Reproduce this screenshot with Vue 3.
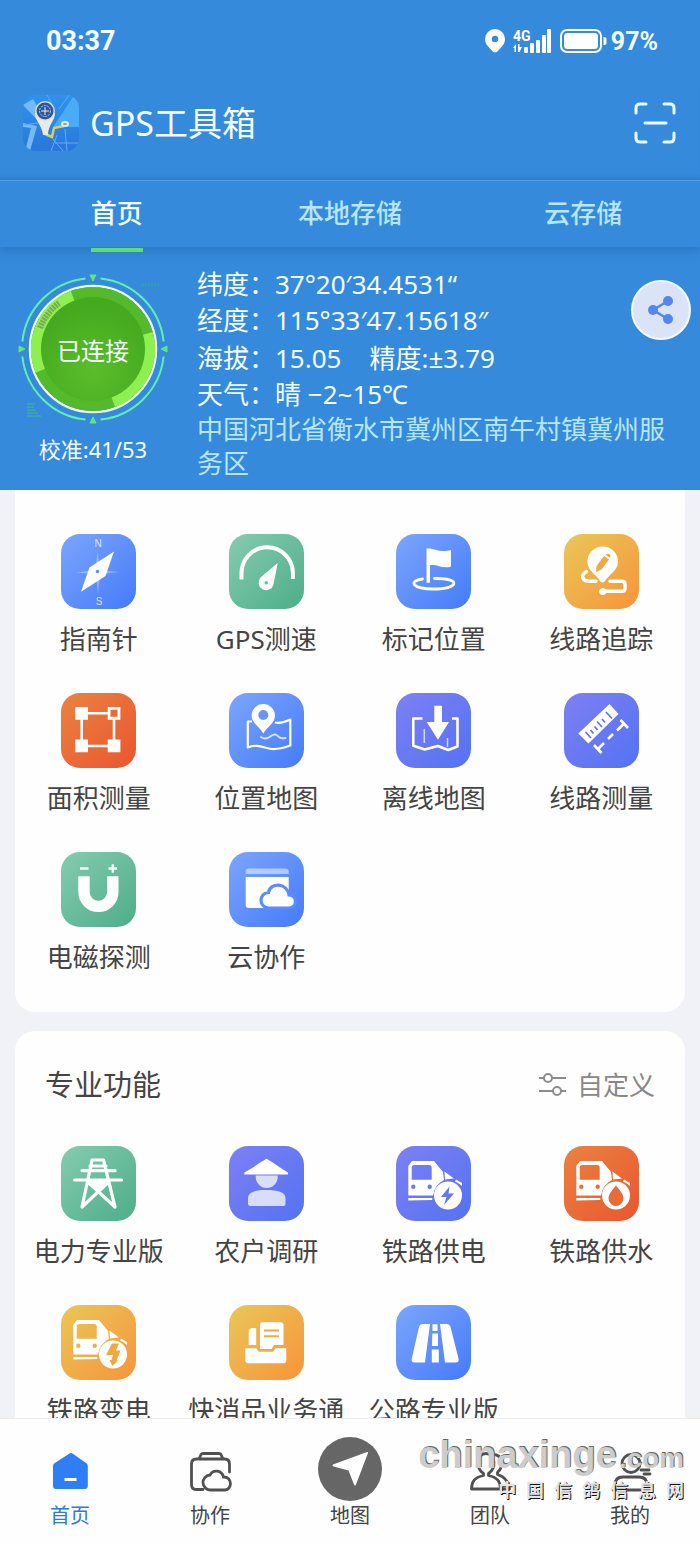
<!-- src/App.vue -->
<template>
  <div class="app">
    <header class="top">
      <div class="status-bar">
        <span class="clock">03:37</span>
        <div class="status-icons">
          <svg width="20" height="24" viewBox="0 0 20 24">
            <path fill="#fff" fill-rule="evenodd" d="M10 0a10 10 0 0 1 10 10c0 5-3.500 8-6.500 11.300-2.500 3-4.500 3-7 0C3.500 18 0 15 0 10A10 10 0 0 1 10 0zm0 6.800a3.200 3.200 0 1 0 0 6.400 3.200 3.200 0 0 0 0-6.400z" />
          </svg>
          <svg width="39" height="24" viewBox="0 0 39 24" fill="#fff">
            <text x="0" y="12" class="net-text">4G</text>
            <path d="M3 15v8H1.500v-4H0zM5 15h1.500v3H9l-2.500 5H5z" />
            <rect x="11" y="18" width="4" height="6" rx="1" />
            <rect x="17" y="14" width="4" height="10" rx="1" />
            <rect x="23" y="11" width="4" height="13" rx="1" />
            <rect x="29" y="6" width="4" height="18" rx="1" />
            <rect x="34" y="0" width="4" height="24" rx="1" />
          </svg>
          <svg width="47" height="24" viewBox="0 0 47 24">
            <rect x="1" y="1" width="40" height="22" rx="6" fill="none" stroke="#fff" stroke-width="2" />
            <rect x="4" y="4" width="34" height="16" rx="3.500" fill="#fff" />
            <path d="M43.500 8q3 0 3 2v4q0 2-3 2z" fill="#fff" />
          </svg>
          <span class="battery-text">97%</span>
        </div>
      </div>

      <div class="title-bar">
        <svg class="app-logo" viewBox="0 0 56 56" aria-hidden="true">
          <defs>
            <clipPath id="logoClip"><rect width="56" height="56" rx="13" /></clipPath>
            <linearGradient id="logoBg" x1="0" y1="0" x2="0" y2="1">
              <stop offset="0" stop-color="#2f92ee" />
              <stop offset="1" stop-color="#2a76dc" />
            </linearGradient>
          </defs>
          <g clip-path="url(#logoClip)">
            <rect width="56" height="56" fill="url(#logoBg)" />
            <path d="M30 32 50 2h6v30z" fill="#4aabf8" />
            <path d="M0 10 10 4l14 24-4 3zM0 28l14 3-7 25H2l6-23-8-1z" fill="#74bbf6" />
            <path d="M36 14 46 0M24 0l5 10M0 30l15-2M30 44l10 12M42 34l2 22M32 48h24M34 40l-6 16" stroke="#62abf0" stroke-width="1" fill="none" />
            <path d="M22 39l7 3 2-9 10-2" stroke="#d9cf58" stroke-width="2.500" fill="none" />
            <ellipse cx="42" cy="29" rx="4" ry="3" fill="#e3eddf" />
            <ellipse cx="42" cy="29" rx="2" ry="1" fill="#78a56c" />
            <path d="M12 18c0 8 7 12 8 22h5c0-10 7-14 7-22z" fill="#e6ebe8" />
            <circle cx="22" cy="16" r="10" fill="#d4e4c4" />
            <circle cx="22" cy="16" r="8.500" fill="#32549b" />
            <circle cx="22" cy="16" r="5.500" fill="none" stroke="#b5cbe7" stroke-dasharray="2 1" />
            <path d="M22 12v8M18 16h8" stroke="#e6eefb" />
          </g>
        </svg>
        <h1 class="app-title">GPS工具箱</h1>
        <button class="scan-btn" title="扫一扫">
          <svg width="42" height="42" viewBox="0 0 42 42" fill="none" stroke="#e9fbff" stroke-width="3" stroke-linecap="round">
            <path d="M2 11V6q0-4 4-4h6M30 2h6q4 0 4 4v5M40 31v5q0 4-4 4h-6M12 40H6q-4 0-4-4v-5M11 21h21" />
          </svg>
        </button>
      </div>

      <nav class="tabs">
        <button
            v-for="(tab, idx) in tabs"
            :key="tab"
            class="tab"
            :class="{ active: idx === currentTab }"
            @click="currentTab = idx"
        >
          <span class="tab-label">{{ tab }}</span>
        </button>
      </nav>

      <section class="gps-panel">
        <div class="connect">
          <div class="dial">
            <svg viewBox="0 0 150 150" aria-hidden="true">
              <defs>
                <radialGradient id="dialBg" cx="0.5" cy="0.7" r="0.6">
                  <stop offset="0" stop-color="#5bbd2a" />
                  <stop offset="1" stop-color="#45aa20" />
                </radialGradient>
              </defs>
              <g fill="none">
                <path d="M82.500 4.400A71 71 0 0 1 145.600 67.500M145.600 82.500A71 71 0 0 1 82.500 145.600M67.500 145.600A71 71 0 0 1 4.400 82.500M4.400 67.500A71 71 0 0 1 67.500 4.400" stroke="#62f0a8" stroke-width="2" />
                <circle cx="75" cy="75" r="63" stroke="#eafff4" stroke-width="2.500" />
                <circle cx="75" cy="75" r="56.500" stroke="#54b92b" stroke-width="11" />
                <path d="M22.800 96.600A56.500 56.500 0 0 1 54.800 22.200M129.400 59.400A56.500 56.500 0 0 1 95.200 127.800" stroke="#8df04f" stroke-width="11" />
                <path d="M22 54A57 57 0 0 1 41 29" stroke="#78a85a" stroke-width="6" stroke-dasharray="2 1" />
                <path d="M9 130h8M9 133h7M9 136h9M9 139h11M9 142h14" stroke="#3fbd8b" />
                <path d="M124 11h18" stroke="#2f9fae" stroke-width="3" stroke-dasharray="2 1" />
                <path d="M128 16h12" stroke="#3091c0" />
              </g>
              <circle cx="75" cy="75" r="52" fill="url(#dialBg)" />
              <path d="M72 1h6l-3 6zM72 149h6l-3-6zM1 72v6l6-3zM149 72v6l-6-3z" fill="#5fe873" stroke="#5fe873" />
            </svg>
            <span class="dial-text">已连接</span>
          </div>
          <p class="calibration">校准:41/53</p>
        </div>

        <div class="readings">
          <p>纬度：37°20′34.4531“</p>
          <p>经度：115°33′47.15618″</p>
          <p class="altitude"><span>海拔：15.05</span><span>精度:±3.79</span></p>
          <p>天气：晴 −2~15℃</p>
          <p class="address">中国河北省衡水市冀州区南午村镇冀州服务区</p>
        </div>

        <button class="share-btn" title="分享">
          <svg width="28" height="30" viewBox="0 0 28 30" fill="#5585ee">
            <path d="M21 6 6 15l15 9" fill="none" stroke="#5585ee" stroke-width="2.500" />
            <circle cx="6" cy="15" r="5" />
            <circle cx="21" cy="6" r="5" />
            <circle cx="21" cy="24" r="5" />
          </svg>
        </button>
      </section>
    </header>

    <main class="content">
      <section class="card card-first">
        <div class="tool-grid">
          <button v-for="tool in tools" :key="tool.name" class="tool">
            <svg class="tool-icon" :class="tool.color" viewBox="0 0 75 75" v-html="glyphs[tool.icon]"></svg>
            <span class="tool-name">{{ tool.name }}</span>
          </button>
        </div>
      </section>

      <section class="card">
        <div class="card-head">
          <h2>专业功能</h2>
          <button class="custom-btn">
            <svg width="28" height="24" viewBox="0 0 28 24" fill="none" stroke="#8c8c8c" stroke-width="2">
              <path d="M0 5h5M13 5h14M0 18h14M22 18h5" />
              <circle cx="9" cy="5" r="4" />
              <circle cx="18" cy="18" r="4" />
            </svg>
            自定义
          </button>
        </div>
        <div class="tool-grid">
          <button v-for="tool in proTools" :key="tool.name" class="tool">
            <svg class="tool-icon" :class="tool.color" viewBox="0 0 75 75" v-html="glyphs[tool.icon]"></svg>
            <span class="tool-name">{{ tool.name }}</span>
          </button>
        </div>
      </section>
    </main>

    <footer class="bottom-nav">
      <a
          v-for="item in navItems"
          :key="item.name"
          class="nav-item"
          :class="{ active: item.name === '首页' }"
          href="#"
      >
        <svg class="nav-icon" viewBox="0 0 64 64" v-html="navGlyphs[item.icon]"></svg>
        <span>{{ item.name }}</span>
      </a>
      <div class="watermark">
        <div class="mark-site">chinaxinge<span>.com</span></div>
        <div class="mark-name">
          <span v-for="(ch, idx) in '中国信鸽信息网'" :key="idx">{{ ch }}</span>
        </div>
      </div>
    </footer>
  </div>
</template>

<script setup>
import { ref } from 'vue'

// ─── DATA ─────────────────────────────────────────────────────────────────────
const tabs = ['首页', '本地存储', '云存储']
const currentTab = ref(0)

const tools = [
  { name: '指南针',   icon: 'compass', color: 'blue' },
  { name: 'GPS测速',  icon: 'gauge',   color: 'green' },
  { name: '标记位置', icon: 'flag',    color: 'blue' },
  { name: '线路追踪', icon: 'track',   color: 'yellow' },
  { name: '面积测量', icon: 'area',    color: 'orange' },
  { name: '位置地图', icon: 'map',     color: 'blue' },
  { name: '离线地图', icon: 'offline', color: 'purple' },
  { name: '线路测量', icon: 'ruler',   color: 'purple' },
  { name: '电磁探测', icon: 'magnet',  color: 'green' },
  { name: '云协作',   icon: 'cloud',   color: 'blue' },
]

const proTools = [
  { name: '电力专业版',   icon: 'tower',      color: 'green' },
  { name: '农户调研',     icon: 'farmer',     color: 'purple' },
  { name: '铁路供电',     icon: 'trainPower', color: 'purple' },
  { name: '铁路供水',     icon: 'trainWater', color: 'orange' },
  { name: '铁路变电',     icon: 'trainSub',   color: 'yellow' },
  { name: '快消品业务通', icon: 'orders',     color: 'yellow' },
  { name: '公路专业版',   icon: 'road',       color: 'blue' },
]

const navItems = [
  { name: '首页', icon: 'home' },
  { name: '协作', icon: 'share' },
  { name: '地图', icon: 'nav' },
  { name: '团队', icon: 'team' },
  { name: '我的', icon: 'me' },
]

// ─── GLYPHS (75 x 75 tiles) ───────────────────────────────────────────────────

// train front with a round badge at the lower right
function train(badge) {
  return `
    <path fill="#fff" fill-rule="evenodd" d="M12.300 49.500V20L16 15h22l9 11 1 8q-9 4-11 15.500zM18 19q-2.300 0-2.300 3v11.700h20V22q0-3-2.500-3zM17.300 38.500a2.200 2.200 0 1 0 0 4.400 2.200 2.200 0 0 0 0-4.400zm16.400 0a2.200 2.200 0 1 0 0 4.400 2.200 2.200 0 0 0 0-4.400z"/>
    <path fill="#fff" d="M48.500 25.500 58 32.500l-9 1zM60 33.500l6 3.500v3q-3-3-7-4.500zM12.300 52h24v2l-24 .5z"/>
    <circle cx="52" cy="49.500" r="14" fill="#fff"/>
    <g fill="currentColor">${badge}</g>`
}

const glyphs = {
  compass: `
    <path fill="#fff" opacity=".3" d="M36.700 17l2.500 19L58 38l-18.500 2.500L37 59l-2.500-19L15 38.500 34 36z"/>
    <path fill="#fff" d="M53 17.500 44.500 42 20 57.800 28.500 33.500z"/>
    <circle cx="36.500" cy="37.500" r="1.800" fill="currentColor"/>
    <g fill="#fff" opacity=".75" font-family="Liberation Sans" font-size="10" text-anchor="middle"><text x="37" y="12.500">N</text><text x="38" y="71">S</text></g>`,
  gauge: `
    <path fill="none" stroke="#fff" stroke-width="4" d="M12.500 45.500V39a25.700 25.700 0 0 1 51.400 0v6"/>
    <path fill="#fff" fill-rule="evenodd" d="M48.700 29 44.500 50.500a7.600 7.600 0 1 1-13-7zM37.200 47a1.700 1.700 0 1 0 0 3.400 1.700 1.700 0 0 0 0-3.400z"/>`,
  flag: `
    <path fill="none" stroke="#fff" stroke-width="2.800" stroke-linecap="round" d="M26.500 45C12 47 16 55 37.500 55c26 0 28-11 1-10.500"/>
    <path fill="#fff" d="M30.500 14.500c7-1 13 5 24.500 1.500v16.500c-9 3-14-3-21-1v17.200h-3.500z"/>`,
  track: `
    <path fill="none" stroke="#fff" stroke-width="3.500" stroke-linecap="round" d="M22.500 37.500c-6.500 4-4.500 9.800 3.500 9.800h6M46 47.300h12q3 0 3 3v4q0 3-3 3H39"/>
    <circle cx="38.700" cy="57.500" r="3.500" fill="#fff"/>
    <path fill="#fff" d="M38.700 12.500a15.300 15.300 0 0 1 15.300 15c0 9-9 13-13 19.500q-2.500 3-5 0C32 40 23.400 37 23.400 27.500a15.300 15.300 0 0 1 15.300-15z"/>
    <path fill="currentColor" d="M40 22l5 3.500-7.500 10-5.500 2.500.500-6zM41.500 20.500q3-2 5 .8l-.8 2.500z"/>`,
  area: `
    <path fill="none" stroke="#fff" stroke-width="2.600" d="M20.700 20.300H53V53H20.700z"/>
    <path fill="#fff" d="M14.300 14H27v12.700H14.300zM46.700 14h12.700v12.700H46.700zM14.300 46.500H27v12.800H14.300zM46.700 46.500h12.700v12.800H46.700z"/>
    <path fill="currentColor" d="M49.500 16.800h7v7h-7z"/>`,
  map: `
    <path fill="none" stroke="#fff" stroke-width="2.200" stroke-linejoin="round" d="M23 28.500h-4.200v26c9-4.500 17 1 24 1.500 8 .5 13-1.500 18.500-3.500v-26c-6 3-10 4-15.500 3"/>
    <path fill="none" stroke="#fff" stroke-width="2" stroke-linecap="round" opacity=".75" d="M32 44c4 3 7 1.500 10-1 4-3 6-1 8 1s4 1.500 6.500 1"/>
    <path fill="#fff" fill-rule="evenodd" d="M34.300 11A11.700 11.700 0 0 1 46 22.700C46 30 38 34 34.300 40.500 31 34 22.600 30 22.600 22.700A11.700 11.700 0 0 1 34.300 11zm0 6a5 5 0 1 0 0 10 5 5 0 0 0 0-10z"/>`,
  offline: `
    <path fill="none" stroke="#fff" stroke-width="2.600" stroke-linejoin="round" d="M26.500 25.500h-9.200v27.300l11.500 3.700 13-3.500 10.500 4 9.200-3.500v-28H56"/>
    <path stroke="#fff" stroke-width="1.500" opacity=".7" d="M28.300 36v14M51.500 45v9"/>
    <path fill="#fff" d="M38.300 12.700H46V29h7L42 46.700 30.700 29h7.600z"/>`,
  ruler: `
    <path fill="#fff" d="M14.300 40.500 45.500 11l9 10-30 29.500z"/>
    <path stroke="currentColor" stroke-width="1.800" d="M21.500 39l5.500 6M26.500 37l3 3.500M30.500 33.500l3 3.500M33 28.500l5 5.500M38 26l3 3.500M42 19l6 6.500"/>
    <path stroke="#fff" stroke-width="2.600" fill="none" d="M34 56l6-6M44 46l5-5M53 37.500l6.500-6.500M30 52l7.500 8M56.500 27l7.500 8"/>`,
  magnet: `
    <path fill="none" stroke="#fff" stroke-width="11.400" d="M23 24.300V40a14.400 14.400 0 0 0 28.800 0V24.300"/>
    <path stroke="#fff" stroke-width="2.400" opacity=".9" d="M19 16.500h8.500M47.500 16.500h8.500M51.800 12.300v8.500"/>`,
  cloud: `
    <path fill="#fff" opacity=".5" d="M16.700 22v-2.500q0-3 3-3h37q3 0 3 3V22z"/>
    <path fill="#fff" d="M16.700 25h43v13L38 56H20q-3.300 0-3.300-3z"/>
    <path fill="#fff" stroke="currentColor" stroke-width="3.200" d="M40 56a7.500 7.500 0 0 1-.5-15.500C41.500 30 58 30.500 60 43c9 .5 8 13 0 13z"/>`,
  tower: `
    <g fill="none" stroke="#fff" stroke-width="3.200" stroke-linejoin="round" stroke-linecap="round">
      <path d="M21 61 31 14h11.500L54 61M29 20h16M21 24.700h33M13.500 34h47M28.500 37.500 54 61M46 37.500 21 61"/>
    </g>
    <path fill="#fff" d="M28 35h18.500l-9.300 11z"/>`,
  farmer: `
    <path fill="#fff" opacity=".75" d="M26.700 29.500h22V31a11 11 0 0 1-22 0zM19 52c0-6 8-8 18.500-8s19 2 19 8v6q0 2-2 2h-33q-2.500 0-2.500-2z"/>
    <path fill="#fff" d="M15.300 26.500C24 22 30 17 37.500 12.800 45 17 51 22 59 26.500v2H15.300z"/>`,
  trainPower: train('<path d="M53.500 40.500 45 51h5.500L48 59l10-11.500h-5.500z"/>'),
  trainWater: train('<path d="M52 39.500c3 4 7.500 8 7.500 13a7.500 7.500 0 0 1-15 0c0-5 4.500-9 7.500-13z"/>'),
  trainSub: train('<path d="M51 38.500h7l-3 7h4.500l-4 10 2-.5-6 6-3-6h2l1.500-5h-7z"/>'),
  orders: `
    <path fill="#fff" d="M19.700 40V27q0-4 4-4h3.500v17zM16.300 43.300h11l2.500 3.500H44l2.500-3.500h10.800v12q0 3-3 3h-35q-3 0-3-3z"/>
    <path fill="#fff" d="M31 20.500q0-3.200 3-3.200h17.500q3 0 3 3V40H45l-2.500 4H31z"/>
    <path stroke="currentColor" stroke-width="2" d="M35 25.500h15M35 31.300h15"/>`,
  road: `
    <path fill="#fff" d="M34 19 29 57.500H18.500q-3.500 0-2.700-4L23 22q1-3 4-3zM44 19h6.500q3 0 4 3l8 31.500q.8 4-2.700 4H49z"/>
    <path fill="#fff" d="M36.500 19.300h5V26h-5zM36.300 28.500H42V41h-6zM35.800 44.500h7v13h-7z"/>`,
}

// bottom bar glyphs (64 x 64)
const navGlyphs = {
  home: `
    <path fill="#2f7ef7" d="M31.500 16.500q1.500-1 3 0L48 26q1.800 1.200 1.800 3v20q0 3-3 3H18q-3 0-3-3V29q0-1.800 1.800-3z"/>
    <path stroke="#fff" stroke-width="3" d="M26.500 42.500h12"/>`,
  share: `
    <g fill="none" stroke="#505050" stroke-width="2.800" stroke-linecap="round">
      <path d="M21 22l2-4.500q.5-1 2-1h16q1.500 0 2 1l2 4.500M25 52.500h-7q-4.500 0-4.500-5V27q0-5 5-5h28q5 0 5 5v8"/>
      <path d="M33 53a7.500 7.500 0 0 1-1-15c3-6 12-5 13.500 2C55 40 54 53 47 53z"/>
    </g>`,
  nav: `
    <circle cx="32" cy="32" r="32" fill="#666"/>
    <path fill="#fff" d="M15 27.500 49 15q1.500-.5 1 1L38 47.500q-1 2.300-2 0l-5.500-14-15-4q-2-1-.5-2z"/>`,
  team: `
    <g fill="none" stroke="#505050" stroke-width="2.800" stroke-linejoin="round">
      <path d="M25.500 36.500c-8-5-7-20 2.500-20s10.500 15 2.500 20v2c9 2 12 6 12 13.500h-29c0-7.500 3-11.500 12-13.500z"/>
      <path d="M35 17.500c10 0 11 12 4.500 18v2c7 2 11 6 12 14.500h-9"/>
    </g>`,
  me: `
    <g fill="none" stroke="#505050" stroke-width="2.800" stroke-linecap="round">
      <circle cx="33" cy="26.500" r="9"/>
      <path d="M17 53v-5q0-8 8-8h16q8 0 8 8v5zM43 33h8M46 37h6"/>
    </g>`,
}
</script>

<style>
body {
  background: #f0f2f8;
}
</style>

<style scoped>
.app {
  display: flex;
  flex-direction: column;
  height: 100vh;
  font-family: "Noto Sans", "Noto Sans CJK SC", sans-serif;
  background: #f0f2f8;
}

button {
  padding: 0;
  border: none;
  background: none;
  font: inherit;
  color: inherit;
  cursor: pointer;
}

svg {
  display: block;
}

h1,
h2,
p {
  margin: 0;
  font-weight: 400;
}

/* ─── HEADER ───────────────────────────────────────────────────────────────── */
.top {
  flex: none;
  color: #f2fdff;
  background: #368adc;
}

.status-bar {
  display: flex;
  align-items: center;
  justify-content: space-between;
  height: 82px;
  padding: 0 42px 0 46px;
  font-family: Roboto, "Noto Sans CJK SC", sans-serif;
  font-size: 27px;
  font-weight: 700;
}

.status-icons {
  display: flex;
  align-items: center;
  gap: 8px;
}

.net-text {
  font-size: 14px;
}

.battery-text {
  margin-left: -4px;
  font-size: 25px;
}

.title-bar {
  display: flex;
  align-items: center;
  height: 99px;
  padding: 0 24px 16px 23px;
  box-sizing: border-box;
  border-bottom: 1px solid #5aa6ec;
  box-shadow: inset 0 -5px 5px -4px rgba(20, 80, 150, 0.25);
}

.app-logo {
  width: 56px;
  height: 56px;
}

.app-title {
  flex: 1;
  margin-left: 11px;
  font-size: 34px;
  line-height: 48px;
}

.tabs {
  position: relative;
  z-index: 1;
  display: flex;
  height: 66px;
  box-shadow: 0 4px 10px rgba(20, 80, 140, 0.35);
}

.tab {
  flex: 1;
  display: flex;
  align-items: flex-start;
  justify-content: center;
  font-size: 26px;
  font-weight: 500;
  color: #b5e6fa;
}

.tab-label {
  position: relative;
  line-height: 64px;
}

.tab.active {
  color: #f2fdff;
}

.tab.active .tab-label::after {
  content: '';
  position: absolute;
  left: 0;
  right: 0;
  bottom: -7px;
  height: 4px;
  background: #5ddf68;
}

/* ─── GPS PANEL ────────────────────────────────────────────────────────────── */
.gps-panel {
  position: relative;
  display: flex;
  gap: 11px;
  padding: 19px 22px 10px 0;
}

.connect {
  flex: none;
  width: 186px;
  padding-top: 8px;
}

.dial {
  position: relative;
  width: 150px;
  margin: 0 auto;
}

.dial-text {
  position: absolute;
  inset: 0;
  display: flex;
  align-items: center;
  justify-content: center;
  font-size: 24px;
}

.calibration {
  margin-top: 10px;
  font-size: 22px;
  line-height: 30px;
  text-align: center;
}

.readings {
  flex: 1;
  font-size: 26px;
  line-height: 36px;
}

.altitude {
  display: flex;
  gap: 28px;
  margin-top: 2px;
}

.address {
  line-height: 34px;
  color: #b5e6fa;
}

.share-btn {
  position: absolute;
  top: 33px;
  right: 9px;
  display: flex;
  align-items: center;
  justify-content: center;
  width: 60px;
  height: 60px;
  border: 2px solid #f2fbff;
  border-radius: 50%;
  background: #dbe4f6;
}

/* ─── CARDS ────────────────────────────────────────────────────────────────── */
.content {
  flex: 1;
  min-height: 0;
  padding: 0 15px;
  overflow-y: auto;
  scrollbar-width: none;
}

.card {
  padding: 35px 0;
  border-radius: 20px;
  background: #fefefe;
}

.card-first {
  margin-bottom: 19px;
  padding-top: 44px;
  border-radius: 0 0 20px 20px;
}

.card-head {
  display: flex;
  align-items: center;
  justify-content: space-between;
  margin-bottom: 42px;
  padding: 0 30px;
  line-height: 38px;
  color: #444;
}

.card-head h2 {
  font-size: 29px;
}

.custom-btn {
  display: flex;
  align-items: center;
  gap: 10px;
  font-size: 26px;
  line-height: 38px;
  color: #888;
}

.tool-grid {
  display: grid;
  grid-template-columns: repeat(4, 1fr);
  row-gap: 34px;
}

.tool {
  display: flex;
  flex-direction: column;
  align-items: center;
  gap: 10px;
  min-width: 0;
  color: #444;
}

.tool-icon {
  width: 75px;
  height: 75px;
  border-radius: 19px;
}

.tool-name {
  font-size: 26px;
  line-height: 40px;
  white-space: nowrap;
}

.blue {
  color: #5a8cfb;
  background: linear-gradient(135deg, #7ca5fc, #457bfa);
}

.green {
  color: #62b795;
  background: linear-gradient(135deg, #86cbb0, #4dae88);
}

.yellow {
  color: #efa941;
  background: linear-gradient(135deg, #e9c758, #f7943a);
}

.orange {
  color: #e96b38;
  background: linear-gradient(135deg, #e98340, #eb5530);
}

.purple {
  color: #6477ee;
  background: linear-gradient(135deg, #7d80f3, #5472f2);
}

/* ─── BOTTOM NAV ───────────────────────────────────────────────────────────── */
.bottom-nav {
  position: relative;
  flex: none;
  display: flex;
  padding: 18px 0 15px;
  border-top: 1px solid #eee;
  background: #fefefe;
}

.nav-item {
  flex: 1;
  display: flex;
  flex-direction: column;
  align-items: center;
  gap: 2px;
  font-size: 20px;
  line-height: 26px;
  color: #444;
  text-decoration: none;
}

.nav-item.active {
  color: #2f78dd;
}

.nav-icon {
  width: 64px;
  height: 64px;
}

.watermark {
  position: absolute;
  top: 15px;
  right: 16px;
  color: #ccc;
  pointer-events: none;
}

.mark-site {
  font-family: "Liberation Sans", sans-serif;
  font-size: 38px;
  font-weight: 700;
  line-height: 42px;
  text-shadow: 1px -1px 0 #666;
}

.mark-site span {
  margin-left: 2px;
  font-size: 28px;
}

.mark-name {
  display: flex;
  justify-content: space-between;
  margin-left: 80px;
  font-size: 18px;
  font-weight: 700;
  line-height: 20px;
  color: #e4e4e4;
  text-shadow: 1px 1px 0 #111;
}
</style>
